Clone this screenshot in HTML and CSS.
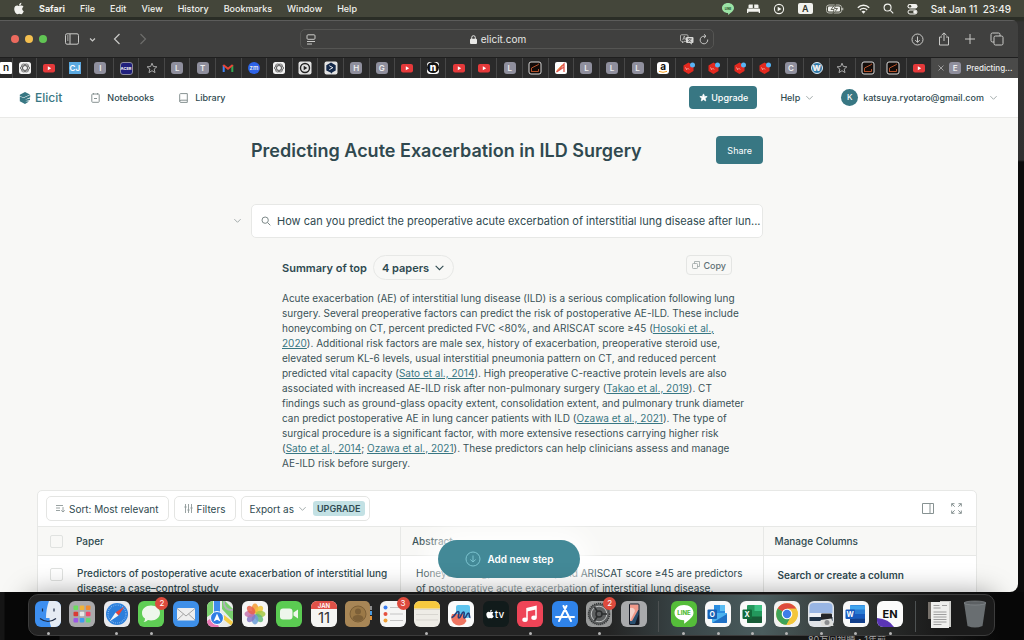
FILE: index.html
```html
<!DOCTYPE html>
<html lang="en">
<head>
    <meta charset="UTF-8" />
    <meta name="viewport" content="width=device-width, initial-scale=1.0"/>
    <title>Predicting Acute Exacerbation in ILD Surgery</title>
    <link rel="stylesheet" href="styles.css">
</head>
<body>
    <!-- Shared icons -->
    <svg class="sprite" aria-hidden="true">
        <symbol id="apple" viewBox="0 0 384 512"><path fill="currentColor" d="M318.7 268.7c-.2-36.7 16.4-64.4 50-84.8-18.8-26.9-47.2-41.7-84.7-44.6-35.5-2.8-74.3 20.7-88.5 20.7-15 0-49.4-19.7-76.4-19.7C63.3 141.2 4 184.8 4 273.5q0 39.3 14.4 81.2c12.8 36.7 59 126.7 107.2 125.2 25.2-.6 43-17.9 75.8-17.9 31.8 0 48.3 17.9 76.4 17.9 48.6-.7 90.4-82.5 102.6-119.3-65.2-30.7-61.7-90-61.7-91.9zm-56.6-164.2c27.3-32.4 24.8-61.9 24-72.5-24.1 1.4-52 16.4-67.9 34.9-17.5 19.8-27.8 44.3-25.6 71.9 26.1 2 49.9-11.4 69.5-34.3z"/></symbol>
        <symbol id="chevron" viewBox="0 0 10 10"><path d="M1.500 3.500 5 7l3.500-3.500" fill="none" stroke="currentColor" stroke-width="1"/></symbol>
        <symbol id="search" viewBox="0 0 12 12"><g fill="none" stroke="currentColor" stroke-width="1.200"><circle cx="5" cy="5" r="3.800"/><path d="m8 8 3.200 3.200"/></g></symbol>
        <symbol id="youtube" viewBox="0 0 14 14"><rect x="1" y="3" width="12" height="8.500" rx="2" fill="#e5393a"/><path d="M5.800 5.300v4l3.400-2z" fill="#fff"/></symbol>
        <symbol id="openai" viewBox="0 0 14 14"><rect x="1" y="1" width="12" height="12" rx="2.500" fill="#f1f1f1"/><g fill="none" stroke="#333" stroke-width=".6"><ellipse cx="7" cy="7" rx="4.600" ry="2.300"/><ellipse cx="7" cy="7" rx="4.600" ry="2.300" transform="rotate(60 7 7)"/><ellipse cx="7" cy="7" rx="4.600" ry="2.300" transform="rotate(120 7 7)"/></g></symbol>
        <symbol id="star" viewBox="0 0 12 12"><path d="M6 1.200 7.400 4.500l3.500.3-2.700 2.300.8 3.500L6 8.700l-3 1.900.8-3.500-2.700-2.300 3.500-.3z" stroke="currentColor"/></symbol>
        <symbol id="graph" viewBox="0 0 14 14"><rect x="1" y="1" width="12" height="12" rx="2" fill="#120c0a" stroke="#d8d8d8"/><path d="M3.500 11V7l7-3.500v-.8M3.500 10.500h7V8" fill="none" stroke="#b4512a" stroke-width="1"/></symbol>
        <symbol id="redhex" viewBox="0 0 14 14"><path d="m6.500 1.500 5 3v5.500l-5 3-5-3V4.500z" fill="#e3291f"/><path d="m3.500 6.500 1.500 2.500m.5-2L7 8.500" stroke="#fff" stroke-width=".6"/><circle cx="10.500" cy="4" r="2.500" fill="#56b4f4"/></symbol>
    </svg>

    <div class="desktop">
        <header class="menubar">
            <nav class="menu-left">
                <svg class="apple"><use href="#apple"/></svg>
                <b>Safari</b><span>File</span><span>Edit</span><span>View</span><span>History</span><span>Bookmarks</span><span>Window</span><span>Help</span>
            </nav>
            <div class="menu-right">
                <svg width="12" height="12" viewBox="0 0 12 12"><path d="M6 0c3.400 0 6 2.200 6 5s-3 4.800-6 7c.2-1 .2-1.600 0-2-3.400 0-6-2.200-6-5s2.600-5 6-5z" fill="#9be3a5"/><text x="6" y="6.500" class="line-mini">LINE</text></svg>
                <svg width="13" height="11" viewBox="0 0 13 11"><path d="M1.500 5V2.500q0-1 1-1h3.300V5zM7.200 5V1.500h3.300q1 0 1 1V5z" fill="#f2f2ee"/><path d="M0 6.500q0-1 1-1h11q1 0 1 1V10h-1.300V8.700H1.300V10H0z" fill="#f2f2ee"/></svg>
                <svg width="12" height="12" viewBox="0 0 12 12"><circle cx="6" cy="6" r="4.600" fill="none" stroke="#f2f2ee" stroke-width="1.100"/><path d="M4.700 3.700v4.600L8.500 6z" fill="#f2f2ee"/></svg>
                <span class="input-source">A</span>
                <svg width="18" height="10" viewBox="0 0 18 10"><rect x=".5" y="1" width="15" height="8" rx="2.500" fill="none" stroke="#b9bab2"/><rect x="2" y="2.500" width="12" height="5" rx="1" fill="#f2f2ee"/><path d="M9.500 0 5 5.500h3L7 10l4.500-5.500h-3z" fill="#f2f2ee" stroke="#44463a" stroke-width=".8"/><path d="M16.700 3.700v2.600" stroke="#b9bab2" stroke-width="1.200"/></svg>
                <svg width="13" height="10" viewBox="0 0 13 10"><g fill="none" stroke="#f2f2ee" stroke-width="1.400"><path d="M.8 3.700a8 8 0 0 1 11.400 0"/><path d="M2.800 5.900a5.200 5.200 0 0 1 7.400 0"/></g><path d="M4.500 7.600a3 3 0 0 1 4 0L6.500 9.800z" fill="#f2f2ee"/></svg>
                <svg width="11" height="11"><use href="#search"/></svg>
                <svg width="11" height="12" viewBox="0 0 11 12"><rect x=".5" y="1" width="10" height="4.500" rx="2.200" fill="#f2f2ee"/><circle cx="3" cy="3.200" r="1.300" fill="#44463a"/><rect x="1" y="7" width="9" height="4" rx="2" fill="none" stroke="#f2f2ee"/><circle cx="8" cy="9" r="1.800" fill="#f2f2ee"/></svg>
                <time>Sat Jan 11&nbsp; 23:49</time>
            </div>
        </header>

        <section class="window">
            <div class="toolbar">
                <div class="lights"><i class="red"></i><i class="yellow"></i><i class="green"></i></div>
                <button class="tool sidebar" aria-label="Sidebar"><svg width="14" height="12" viewBox="0 0 14 12" fill="none" stroke="currentColor"><rect x=".5" y=".8" width="13" height="10.400" rx="1.500"/><path d="M5 1v10M2 3h1.500M2 5h1.500M2 7h1.500"/></svg></button>
                <button class="tool arrow" aria-label="Tab groups"><svg width="7" height="7" viewBox="0 0 10 10"><path d="M1.500 3.500 5 7l3.500-3.500" fill="none" stroke="currentColor" stroke-width="1.800"/></svg></button>
                <button class="tool back" aria-label="Back"><svg width="8" height="12" viewBox="0 0 8 12"><path d="M6.500 1 1.500 6l5 5" fill="none" stroke="currentColor" stroke-width="1.200"/></svg></button>
                <button class="tool forward" aria-label="Forward"><svg width="8" height="12" viewBox="0 0 8 12"><path d="m1.500 1 5 5-5 5" fill="none" stroke="currentColor" stroke-width="1.200"/></svg></button>
                <div class="address">
                    <svg width="10" height="11" viewBox="0 0 10 11" fill="none" stroke="#c9c9c7"><rect x="1" y=".8" width="8" height="4.500" rx="1"/><path d="M1 7.500h8M1 10h5"/></svg>
                    <span class="host"><svg width="7" height="9" viewBox="0 0 7 9"><rect y="3.800" width="7" height="5.200" rx="1" fill="#e8e8e6"/><path d="M1.700 4V2.500a1.800 1.800 0 0 1 3.600 0V4" fill="none" stroke="#e8e8e6"/></svg>elicit.com</span>
                    <svg width="14" height="11" viewBox="0 0 14 11"><path d="M1.500.8h5.500a1 1 0 0 1 1 1v4.500a1 1 0 0 1-1 1H4L2.500 9V7.300h-1a1 1 0 0 1-1-1V1.800a1 1 0 0 1 1-1z" fill="none" stroke="#c9c9c7" stroke-width=".8"/><path d="m2.700 6 1.600-4 1.500 4M3.200 4.800h2.200" fill="none" stroke="#c9c9c7" stroke-width=".7"/><path d="M7 3h5.500a1 1 0 0 1 1 1v4a1 1 0 0 1-1 1h-.7v1.700L10 9H7a1 1 0 0 1-1-1V4a1 1 0 0 1 1-1z" fill="#d8d8d6"/><path d="M7.700 4.800h4M9.700 4v.8M8 7.800c1.500-.5 2.600-1.500 3-3M8.300 5c.6 1.500 1.500 2.400 3 2.900" fill="none" stroke="#444" stroke-width=".7"/></svg>
                    <svg width="10" height="11" viewBox="0 0 10 11"><path d="M8.700 5.500A3.800 3.800 0 1 1 5 2.200h1.500M5 .3l2 1.900-2 1.900" fill="none" stroke="#c9c9c7"/></svg>
                </div>
                <div class="window-tools">
                    <svg width="13" height="13" viewBox="0 0 13 13"><circle cx="6.500" cy="6.500" r="5.500"/><path d="M6.500 3.500v5.800M4.200 7l2.300 2.400L8.800 7"/></svg>
                    <svg width="12" height="14" viewBox="0 0 12 14"><path d="M4 5H1.500v8h9V5H8M6 9V1M3.500 3.300 6 .9l2.500 2.400"/></svg>
                    <svg width="12" height="12" viewBox="0 0 12 12"><path d="M6 1v10M1 6h10"/></svg>
                    <svg width="14" height="14" viewBox="0 0 14 14"><rect x="4" y="4" width="9" height="9" rx="1.500"/><path d="M4 10H2.500A1.500 1.500 0 0 1 1 8.500v-6A1.500 1.500 0 0 1 2.500 1h6A1.500 1.500 0 0 1 10 2.500V4"/></svg>
                </div>
            </div>

            <div class="tabs">
                <span class="tab tab-cut"><i class="fav fav-n">n</i></span>
                <span class="tab tab-first"><svg><use href="#openai"/></svg></span>
                <span class="tab"><svg><use href="#youtube"/></svg></span>
                <span class="tab"><i class="fav fav-cj">CJ</i></span>
                <span class="tab"><i class="fav">I</i></span>
                <span class="tab"><i class="fav fav-acer">ACER</i></span>
                <span class="tab"><svg class="tab-star"><use href="#star"/></svg></span>
                <span class="tab"><i class="fav">L</i></span>
                <span class="tab"><i class="fav">T</i></span>
                <span class="tab"><svg viewBox="0 0 14 14"><path d="M2.700 11V4" stroke="#4285f4" stroke-width="2"/><path d="M11.300 11V4" stroke="#34a853" stroke-width="2"/><path d="m2.300 4 4.700 3.700L11.700 4" fill="none" stroke="#ea4335" stroke-width="2"/></svg></span>
                <span class="tab"><i class="fav fav-zm">zm</i></span>
                <span class="tab"><svg><use href="#openai"/></svg></span>
                <span class="tab"><svg viewBox="0 0 14 14"><rect x=".5" y=".5" width="13" height="13" rx="2" fill="#e3e3e3"/><circle cx="7" cy="7" r="4.500" fill="none" stroke="#222" stroke-width="1.400"/><path d="M5.700 4.800v4.400L9.300 7z" fill="#222"/></svg></span>
                <span class="tab"><svg viewBox="0 0 14 14"><rect x=".5" y=".5" width="13" height="13" rx="2" fill="#e3e3e3"/><path d="m7 1.500 4.700 2.700v5.300L8.500 11.300 7 12.800v-1L2.300 9.500V4.200z" fill="#14294a"/><path d="m5.300 4.700 3.500 2-3.500 2" fill="none" stroke="#fff" stroke-width=".9"/></svg></span>
                <span class="tab"><i class="fav">H</i></span>
                <span class="tab"><i class="fav">G</i></span>
                <span class="tab"><svg><use href="#youtube"/></svg></span>
                <span class="tab"><i class="fav fav-disc"><b>n</b></i></span>
                <span class="tab"><svg><use href="#youtube"/></svg></span>
                <span class="tab"><svg><use href="#youtube"/></svg></span>
                <span class="tab"><i class="fav">L</i></span>
                <span class="tab"><svg><use href="#graph"/></svg></span>
                <span class="tab"><svg viewBox="0 0 14 14"><rect x="1" y="1" width="12" height="12" rx="2" fill="#fff"/><path d="M2.500 11 10 3v8M2.500 11 10 6" fill="none" stroke="#e2574c" stroke-width="1.300"/><path d="M3 9.500 8 4" stroke="#f0a050"/></svg></span>
                <span class="tab"><i class="fav">L</i></span>
                <span class="tab"><i class="fav">L</i></span>
                <span class="tab"><i class="fav">L</i></span>
                <span class="tab"><i class="fav fav-amazon">a<svg viewBox="0 0 8 2"><path d="M0 .4q4 1.800 8 0" fill="none" stroke="#f39b1c"/></svg></i></span>
                <span class="tab"><svg><use href="#redhex"/></svg></span>
                <span class="tab"><svg><use href="#redhex"/></svg></span>
                <span class="tab"><svg><use href="#redhex"/></svg></span>
                <span class="tab"><svg><use href="#redhex"/></svg></span>
                <span class="tab"><i class="fav">C</i></span>
                <span class="tab"><i class="fav fav-wp"><b>W</b></i></span>
                <span class="tab"><svg class="tab-star"><use href="#star"/></svg></span>
                <span class="tab"><svg><use href="#graph"/></svg></span>
                <span class="tab"><svg><use href="#graph"/></svg></span>
                <span class="tab"><svg><use href="#youtube"/></svg></span>
                <span class="tab tab-active">
                    <svg class="tab-close" viewBox="0 0 6 6"><path d="m.5.5 5 5m0-5-5 5" stroke="#b5b5b5" stroke-width=".8"/></svg>
                    <i class="fav">E</i>
                    Predicting...
                </span>
            </div>

            <div class="page">
                <header class="site-header">
                    <a href="#" class="brand"><svg width="12" height="12" viewBox="0 0 12 12" fill="#387783"><path d="M6 0 11 2.500 4.500 5.400.8 4V2.700z"/><path d="M.8 4.600 4.600 6 11.200 3v2.300L5.800 7.800 11 6.600v1.500L6.200 9.200l3.800.2L6 12 .8 9.300z"/></svg>Elicit</a>
                    <a href="#" class="nav-link nav-notebooks"><svg width="9" height="10" viewBox="0 0 9 10" fill="none" stroke="currentColor"><rect x=".8" y="1" width="7.400" height="8.300" rx=".8"/><path d="M3 5.500h3M2.500 0v1.500M6.500 0v1.500"/></svg>Notebooks</a>
                    <a href="#" class="nav-link nav-library"><svg width="9" height="10" viewBox="0 0 9 10" fill="none" stroke="currentColor"><path d="M.7 8.500V1.500q0-.9.900-.9h6.700v6.600H2Q.7 7.200.7 8.300T2 9.400h6.300V7"/></svg>Library</a>
                    <a href="#" class="upgrade-btn"><svg width="9" height="9" fill="#fff" color="#fff"><use href="#star"/></svg>Upgrade</a>
                    <button class="nav-menu help-menu">Help<svg class="chev"><use href="#chevron"/></svg></button>
                    <button class="nav-menu"><span class="avatar">K</span>katsuya.ryotaro@gmail.com<svg class="chev"><use href="#chevron"/></svg></button>
                </header>

                <main>
                    <div class="column">
                        <div class="title-row">
                            <h1>Predicting Acute Exacerbation in ILD Surgery</h1>
                            <button class="share-btn">Share</button>
                        </div>

                        <div class="question-row">
                            <button class="collapse" aria-label="Collapse"><svg class="chev"><use href="#chevron"/></svg></button>
                            <label class="question">
                                <svg width="10" height="10"><use href="#search"/></svg>
                                <input type="text" aria-label="Question" value="How can you predict the preoperative acute excerbation of interstitial lung disease after lun..." />
                            </label>
                        </div>

                        <section class="summary">
                            <div class="summary-head">
                                <h2>Summary of top</h2>
                                <button class="papers-btn">4 papers<svg width="11" height="11"><use href="#chevron"/></svg></button>
                                <button class="copy-btn"><svg width="8" height="8" viewBox="0 0 8 8" fill="none" stroke="#9ba3a3" stroke-width=".8"><rect x=".5" y="2.500" width="5" height="5" rx=".8"/><path d="M2.500 2.500v-2h5v5h-2"/></svg>Copy</button>
                            </div>
                            <p>Acute exacerbation (AE) of interstitial lung disease (ILD) is a serious complication following lung<br>
                            surgery. Several preoperative factors can predict the risk of postoperative AE-ILD. These include<br>
                            honeycombing on CT, percent predicted FVC &lt;80%, and ARISCAT score ≥45 (<a href="#">Hosoki et al.,<br>
                            2020</a>). Additional risk factors are male sex, history of exacerbation, preoperative steroid use,<br>
                            elevated serum KL-6 levels, usual interstitial pneumonia pattern on CT, and reduced percent<br>
                            predicted vital capacity (<a href="#">Sato et al., 2014</a>). High preoperative C-reactive protein levels are also<br>
                            associated with increased AE-ILD risk after non-pulmonary surgery (<a href="#">Takao et al., 2019</a>). CT<br>
                            findings such as ground-glass opacity extent, consolidation extent, and pulmonary trunk diameter<br>
                            can predict postoperative AE in lung cancer patients with ILD (<a href="#">Ozawa et al., 2021</a>). The type of<br>
                            surgical procedure is a significant factor, with more extensive resections carrying higher risk<br>
                            (<a href="#">Sato et al., 2014</a>; <a href="#">Ozawa et al., 2021</a>). These predictors can help clinicians assess and manage<br>
                            AE-ILD risk before surgery.</p>
                        </section>
                    </div>

                    <section class="papers">
                        <div class="papers-tools">
                            <button class="tool-btn sort-btn"><svg width="9" height="9" viewBox="0 0 9 9" fill="none" stroke="#8f9898" stroke-width=".9"><path d="M0 1.500h7M0 4h4M0 6.500h4M7 3v5M5.200 6.300 7 8l1.800-1.700"/></svg>Sort: Most relevant</button>
                            <button class="tool-btn filter-btn"><svg width="9" height="9" viewBox="0 0 9 9" fill="none" stroke="#8f9898" stroke-width=".9"><path d="M1.500 0v9M4.500 0v9M7.500 0v9M.3 3h2.400M3.300 6h2.400M6.300 4h2.400"/></svg>Filters</button>
                            <button class="tool-btn export-btn">Export as<svg class="chev"><use href="#chevron"/></svg><span class="upgrade-tag">UPGRADE</span></button>
                            <div class="view-btns">
                                <button aria-label="Side panel"><svg width="12" height="11" viewBox="0 0 12 11" fill="none" stroke="currentColor"><path d="M.5.5h11v10H.5zM8 .5v10"/></svg></button>
                                <button aria-label="Full screen"><svg width="11" height="11" viewBox="0 0 11 11" fill="none" stroke="currentColor"><path d="M.7 3.500V.7h2.800M.7.7l3 3M7.500.7h2.800v2.800M10.300.7l-3 3M.7 7.500v2.800h2.800M.7 10.300l3-3M10.300 7.500v2.800H7.500M10.300 10.300l-3-3"/></svg></button>
                            </div>
                        </div>
                        <table>
                            <thead>
                                <tr>
                                    <th><label><input type="checkbox" aria-label="Select all" />Paper</label></th>
                                    <th>Abstract</th>
                                    <th>Manage Columns</th>
                                </tr>
                            </thead>
                            <tbody>
                                <tr>
                                    <td><label><input type="checkbox" /><span>Predictors of postoperative acute exacerbation of interstitial lung<br>disease: a case–control study</span></label></td>
                                    <td class="abstract">Honeycombing, %FVC &lt;80%, and ARISCAT score ≥45 are predictors<br>of postoperative acute exacerbation of interstitial lung disease.</td>
                                    <td class="search-col">Search or create a column</td>
                                </tr>
                            </tbody>
                        </table>
                    </section>
                </main>

                <button class="add-step"><svg width="16" height="16" viewBox="0 0 16 16" fill="none" stroke="#7cc4d0"><circle cx="8" cy="8" r="7"/><path d="M8 4.500v6.500M5.300 8.500 8 11l2.700-2.500"/></svg>Add new step</button>
            </div>
        </section>

        <footer class="dock-area">
            <div class="dock">
                <span class="app running"><svg viewBox="0 0 26 26"><rect width="26" height="26" rx="6" fill="#3d8ff0"/><path d="M14 0h6a6 6 0 0 1 6 6v14a6 6 0 0 1-6 6h-4c-1-3-1.500-6-1.500-9H11C11 11 12 5 14 0z" fill="#e6ecf4"/><path d="M7.500 7.500v3M19 7.500v3M5 17.500q8 6 16 0" fill="none" stroke="#1d2a44" stroke-width="1.200"/></svg></span>
                <span class="app"><svg viewBox="0 0 26 26"><rect width="26" height="26" rx="6" fill="#a9a9ac"/><g><rect x="4.500" y="4.500" width="4.600" height="4.600" rx="1" fill="#6bdc5f"/><rect x="10.700" y="4.500" width="4.600" height="4.600" rx="1" fill="#f0b43a"/><rect x="16.900" y="4.500" width="4.600" height="4.600" rx="1" fill="#f08c31"/><rect x="4.500" y="10.700" width="4.600" height="4.600" rx="1" fill="#d93a34"/><rect x="10.700" y="10.700" width="4.600" height="4.600" rx="1" fill="#e6e6e6"/><rect x="16.900" y="10.700" width="4.600" height="4.600" rx="1" fill="#ef4668"/><rect x="4.500" y="16.900" width="4.600" height="4.600" rx="1" fill="#9d57e6"/><rect x="10.700" y="16.900" width="4.600" height="4.600" rx="1" fill="#3f9bf0"/><rect x="16.900" y="16.900" width="4.600" height="4.600" rx="1" fill="#62dc70"/></g></svg></span>
                <span class="app running"><svg viewBox="0 0 26 26"><rect width="26" height="26" rx="6" fill="#e9e9ec"/><circle cx="13" cy="13" r="11" fill="#2c7fdc"/><circle cx="13" cy="13" r="9" fill="none" stroke="#a4cdf5" stroke-width="1.200" stroke-dasharray=".6 1.300"/><path d="m20.500 5.500-9 6 3 3z" fill="#e8443a"/><path d="m5.500 20.500 6-9 3 3z" fill="#f4f4f4"/></svg></span>
                <span class="app running"><svg viewBox="0 0 26 26"><rect width="26" height="26" rx="6" fill="#5fce55"/><path d="M13 4.500c5.200 0 9 3.300 9 7.500s-3.800 7.500-9 7.500q-1.500 0-3-.4Q8 21 5.500 21q1.700-1.500 1.500-3.500Q4 15.500 4 12c0-4.200 3.800-7.500 9-7.500z" fill="#eef7ec"/></svg><em class="badge">2</em></span>
                <span class="app"><svg viewBox="0 0 26 26"><rect width="26" height="26" rx="6" fill="#3e8fe8"/><rect x="4" y="7" width="18" height="12.500" rx="1" fill="#eeeeee"/><path d="m4 7.500 9 7.500 9-7.500M4 19l6.500-6M22 19l-6.500-6" fill="none" stroke="#9a9a9a" stroke-width=".9"/></svg></span>
                <span class="app"><svg viewBox="0 0 26 26"><clipPath id="map-clip"><rect width="26" height="26" rx="6"/></clipPath><g clip-path="url(#map-clip)"><path fill="#e9eceb" d="M0 0h26v26H0z"/><path d="M0 0h6v12L0 16z" fill="#7bd06d"/><path d="m15 8 11 12V8L18 0h-3z" fill="#79d06d"/><path d="M0 26v-6l7-5 5 11z" fill="#ea78b4"/><path d="M7 0h6v14H7z" fill="#3e8cec"/><circle cx="24" cy="2" r="7" fill="none" stroke="#aeb3b5" stroke-width="2"/><path d="m16 18 10 8v-5L17 14z" fill="#f5cd47"/><circle cx="10" cy="17" r="6.500" fill="#2f7de4" stroke="#fff"/><path d="m10 12.500 3.500 8-3.500-1.800-3.500 1.800z" fill="#fff"/></g></svg></span>
                <span class="app"><svg viewBox="0 0 26 26"><rect width="26" height="26" rx="6" fill="#f6f6f5"/><g fill-opacity=".85"><ellipse cx="13" cy="7.500" rx="3.300" ry="5" fill="#f59b31"/><ellipse cx="13" cy="7.500" rx="3.300" ry="5" fill="#eec73a" transform="rotate(45 13 13)"/><ellipse cx="13" cy="7.500" rx="3.300" ry="5" fill="#a5c943" transform="rotate(90 13 13)"/><ellipse cx="13" cy="7.500" rx="3.300" ry="5" fill="#63bb7a" transform="rotate(135 13 13)"/><ellipse cx="13" cy="7.500" rx="3.300" ry="5" fill="#6c9fd9" transform="rotate(180 13 13)"/><ellipse cx="13" cy="7.500" rx="3.300" ry="5" fill="#8577c4" transform="rotate(225 13 13)"/><ellipse cx="13" cy="7.500" rx="3.300" ry="5" fill="#c472ac" transform="rotate(270 13 13)"/><ellipse cx="13" cy="7.500" rx="3.300" ry="5" fill="#e8604c" transform="rotate(315 13 13)"/></g></svg></span>
                <span class="app"><svg viewBox="0 0 26 26"><rect width="26" height="26" rx="6" fill="#5bcb52"/><rect x="4" y="7.500" width="12.500" height="11" rx="3" fill="#eef6ec"/><path d="m17.500 11.500 4.500-3v9l-4.500-3z" fill="#eef6ec"/></svg></span>
                <span class="app"><svg viewBox="0 0 26 26"><rect width="26" height="26" rx="6" fill="#f5f5f3"/><path d="M0 8V6a6 6 0 0 1 6-6h14a6 6 0 0 1 6 6v2z" fill="#df5148"/><text x="13" y="6.500" class="cal-month">JAN</text><text x="13" y="21.500" class="cal-day">11</text></svg></span>
                <span class="app"><svg viewBox="0 0 26 26"><path d="M24 5h3v4h-3z" fill="#8f8f8f"/><path d="M24 10h3v4h-3z" fill="#4d9be0"/><path d="M24 15h3v4h-3z" fill="#e0923c"/><rect width="25" height="26" rx="5" fill="#a88656"/><circle cx="13" cy="13" r="8" fill="#9b7947" stroke="#7d6038"/><circle cx="13" cy="10.500" r="3" fill="#7d6038"/><path d="M7.500 18q0-4 5.500-4t5.500 4q-5.500 4.500-11 0z" fill="#7d6038"/></svg></span>
                <span class="app"><svg viewBox="0 0 26 26"><rect width="26" height="26" rx="6" fill="#f5f5f4"/><circle cx="5.500" cy="6.500" r="2" fill="#3a7df0"/><circle cx="5.500" cy="13" r="2" fill="#e5503f"/><circle cx="5.500" cy="19.500" r="2" fill="#f0a037"/><path d="M10 6.500h13M10 13h13M10 19.500h13" stroke="#c4c4c4"/></svg><em class="badge">3</em></span>
                <span class="app running"><svg viewBox="0 0 26 26"><rect width="26" height="26" rx="6" fill="#eeece6"/><path d="M0 7.500V6a6 6 0 0 1 6-6h14a6 6 0 0 1 6 6v1.500z" fill="#f6c93f"/><path d="M0 8.500h26M2 13.500h22M2 19h22" stroke="#cfcdc6" stroke-width=".7"/></svg></span>
                <span class="app"><svg viewBox="0 0 26 26"><rect width="26" height="26" rx="6" fill="#fbfbfb"/><rect x="8" y="4" width="14" height="13" rx="2" fill="#5fc4ee"/><path d="M4 13a8 8 0 0 0 14.500 7L15 13z" fill="#ef7562"/><path d="M3.500 16.500c3 0 4.500-6 6.500-6 2.500 0-1 6.500 1 6.500s2.500-6 4.500-6-1 6 1 6 2-5 4-5c1.500 0 0 4.500 2 4.500" fill="none" stroke="#243f7c" stroke-width="1.600"/></svg></span>
                <span class="app"><svg viewBox="0 0 26 26"><rect width="26" height="26" rx="6" fill="#111b1b"/><svg x="3" y="8" width="8" height="10" color="#fff"><use href="#apple"/></svg><text x="16.500" y="17" class="apple-tv">tv</text></svg></span>
                <span class="app running"><svg viewBox="0 0 26 26"><rect width="26" height="26" rx="6" fill="#ee4457"/><path d="M10 18.500v-11l9-2v11" fill="none" stroke="#fff" stroke-width="1.500"/><path d="M10 7.500 19 5.500v3l-9 2z" fill="#fff"/><ellipse cx="8" cy="18.800" rx="2.700" ry="2.200" fill="#fff"/><ellipse cx="17" cy="16.800" rx="2.700" ry="2.200" fill="#fff"/></svg></span>
                <span class="app"><svg viewBox="0 0 26 26"><rect width="26" height="26" rx="6" fill="#2f83ea"/><path d="m14.500 5-7.500 15M11.500 5l7.500 15M4 16h11M18.500 16H22" fill="none" stroke="#fff" stroke-width="2" stroke-linecap="round"/></svg></span>
                <span class="app running"><svg viewBox="0 0 26 26"><rect width="26" height="26" rx="6" fill="#9a9b9b"/><circle cx="13" cy="13" r="10.500" fill="#5e6061" stroke="#343637" stroke-width="1.500" stroke-dasharray="1.200 .8"/><circle cx="13" cy="13" r="7.800" fill="none" stroke="#c0c2c2"/><circle cx="13" cy="13" r="3" fill="none" stroke="#2b2d2e" stroke-width="1.500"/><path d="M15.500 13H21M11.500 15 8.500 20M11.500 11l-3-5" stroke="#2b2d2e" stroke-width="1.500"/></svg><em class="badge">2</em></span>
                <span class="app"><svg viewBox="0 0 26 26"><rect width="26" height="26" rx="6" fill="#a9aaac"/><rect x="8" y="2.500" width="10.500" height="21.500" rx="1.500" fill="#171a24"/><path d="M9 3.500h8.500v10L14 23H9z" fill="#294f70"/><path d="M9 3.500h8.500v5L11 20H9z" fill="#ef9a8a"/><path d="M9 7q4-1 5 3L9 20z" fill="#f2d2cb"/></svg></span>
                <span class="divider"></span>
                <span class="app running"><svg viewBox="0 0 26 26"><rect width="26" height="26" rx="6" fill="#55bd3a"/><path d="M13 4c5.500 0 9.500 3.400 9.500 7.700 0 4-4.500 7.300-9.500 11 .3-1.700.3-3 0-3.500-5.500 0-9.500-3.300-9.500-7.500S7.500 4 13 4z" fill="#fff"/><text x="13" y="14" class="line-app">LINE</text></svg></span>
                <span class="app running"><svg viewBox="0 0 26 26"><rect width="26" height="26" rx="6" fill="#f9f9f9"/><path d="M9 4h11v12H9z" fill="#2a8de0"/><path d="M15 4h5v6h-5z" fill="#5bbdf2"/><path d="M7 12h15v9q0 1-1 1H8q-1 0-1-1z" fill="#4ab1ee"/><path d="m7 22 15-9v8q0 1-1 1z" fill="#1f70c4"/><rect x="2.500" y="8.500" width="9.500" height="9.500" rx="1" fill="#1762b5"/><text x="7.200" y="15.800" class="office">O</text></svg></span>
                <span class="app running"><svg viewBox="0 0 26 26"><rect width="26" height="26" rx="6" fill="#f9f9f9"/><rect x="7" y="4" width="15" height="18" rx="1" fill="#23985c"/><path d="M14.500 4H21q1 0 1 1v5h-7.500z" fill="#3cc183"/><path d="M7 15.500h15V21q0 1-1 1H8q-1 0-1-1z" fill="#185c37"/><rect x="2.500" y="8.500" width="9.500" height="9.500" rx="1" fill="#136b3b"/><text x="7.200" y="15.800" class="office">X</text></svg></span>
                <span class="app running"><svg viewBox="0 0 26 26"><rect width="26" height="26" rx="6" fill="#f2f2f1"/><circle cx="13" cy="13" r="10.800" fill="#f3c63b"/><path d="M13 13 3.600 7.600A10.800 10.800 0 0 1 22.400 7.800H13z" fill="#dd4b3e"/><path d="M3.600 7.600A10.800 10.800 0 0 0 12.500 23.800L17 15.500 13 13z" fill="#3da357"/><path d="M13 7.800h9.400A10.800 10.800 0 0 1 12.500 23.800L17.500 15z" fill="#f3c63b"/><circle cx="13" cy="13" r="5.300" fill="#fff"/><circle cx="13" cy="13" r="4.200" fill="#3d7ee8"/></svg></span>
                <span class="app running"><svg viewBox="0 0 26 26"><rect width="26" height="26" rx="6" fill="#dfe3e8"/><rect x="1.500" y="2" width="23" height="14" rx="4" fill="#98b5e3"/><path d="M1.500 12h23v4h-23z" fill="#edf0f5"/><path d="M1.500 16h23v4h-23z" fill="#1d3044"/><rect x="13" y="12.500" width="11" height="6" rx="1" fill="#232529"/><path d="m12.500 19 11-1.500 2 7.500h-12z" fill="#dddedc"/><circle cx="19" cy="21.500" r="2.500" fill="#8b8d90"/></svg></span>
                <span class="app running"><svg viewBox="0 0 26 26"><rect width="26" height="26" rx="6" fill="#f9f9f9"/><rect x="7" y="4" width="15" height="18" rx="1" fill="#2b7cd3"/><path d="M7 4.500h15v4H7z" fill="#41a5ee"/><path d="M7 13h15v4.500H7z" fill="#185abd"/><path d="M7 17.500h15V22H7z" fill="#123f8c"/><rect x="2.500" y="8.500" width="9.500" height="9.500" rx="1" fill="#185abd"/><text x="7.200" y="15.800" class="office">W</text></svg></span>
                <span class="app running"><svg viewBox="0 0 26 26"><rect width="26" height="26" rx="6" fill="#fbfbfb"/><path d="M0 17q12 1 17 9H6a6 6 0 0 1-6-6z" fill="#5a35b5"/><text x="13" y="17" class="en-app">EN</text></svg></span>
                <span class="divider"></span>
                <span class="app"><svg viewBox="0 0 26 26"><path d="M1 1h12v17H1z" fill="#76706a"/><path d="M13 0h11v26H13z" fill="#cfcfcc"/><path d="M4 1h18v26H4z" fill="#efefed"/><path d="M6.500 4.500h6M6.500 7h7M15 4.500h5M6.500 11h13M6.500 13.500h13M6.500 16h13M6.500 18.500h13M6.500 21h13M6.500 23.500h8" stroke="#898989" stroke-width=".8"/></svg></span>
                <span class="app"><svg viewBox="0 0 26 26"><path d="M2 1.500 5.500 25q7.500 3 15 0L24 1.500z" fill="#777c80" fill-opacity=".85"/><ellipse cx="13" cy="2" rx="11" ry="2" fill="#5d6164" stroke="#8b9094" stroke-width=".6"/></svg></span>
            </div>
            <p class="video-meta" lang="ja">80万回視聴・1年前</p>
        </footer>
    </div>
</body>
</html>
```
FILE: styles.css
```css
/* General Reset */
* {
    box-sizing: border-box;
    margin: 0;
    padding: 0;
}

body {
    background-color: #0b0b0b;
    color: #2f4a50;
    font-family: Inter, "Noto Sans CJK JP", sans-serif;
    font-size: 10px;
}

button, input {
    font: inherit;
    color: inherit;
}

button {
    border: none;
    background: none;
    cursor: pointer;
}

a {
    color: inherit;
    text-decoration: none;
}

svg {
    flex: none;
}

.sprite {
    display: none;
}

.chev {
    width: 9px;
    height: 9px;
    color: #9aa3a3;
}

/* Desktop */
.desktop {
    display: flex;
    flex-direction: column;
    height: 100vh;
    overflow: hidden;
    background: linear-gradient(to bottom, #2a2d26 20px, #333332 22px, #303030 160px, #0b0b0b 162px);
}

/* Menu Bar */
.menubar {
    display: flex;
    justify-content: space-between;
    align-items: center;
    height: 17px;
    padding: 0 13px 0 14px;
    background: #44463a;
    color: #f2f2ee;
    font-size: 9px;
    font-weight: 500;
}

.menu-left, .menu-right {
    display: flex;
    align-items: center;
}

.menu-left {
    gap: 15px;
}

.menu-right {
    gap: 13px;
}

.menu-right time {
    font-size: 10px;
}

.apple {
    width: 10px;
    height: 13px;
}

.input-source {
    width: 15px;
    background: #f2f2ee;
    border-radius: 2px;
    color: #33352b;
    font-weight: 600;
    line-height: 11px;
    text-align: center;
}

/* Safari Window */
.window {
    flex: 1;
    min-height: 0;
    display: flex;
    flex-direction: column;
    margin: 3px 6px 0 0;
    border-radius: 0 6px 8px 0;
    overflow: hidden;
}

.toolbar {
    display: flex;
    align-items: center;
    height: 37px;
    padding: 0 14px 0 11px;
    background: #40403f;
    border-top: 1px solid #5c5c5b;
    color: #c9c9c7;
}

.lights {
    display: flex;
    gap: 6px;
    margin-right: 18px;
}

.lights i {
    width: 8px;
    height: 8px;
    border-radius: 50%;
}

.red { background: #ec6a5e; }
.yellow { background: #f4bf4f; }
.green { background: #61c554; }

.tool {
    display: flex;
    color: inherit;
}

.arrow {
    margin: 0 17px 0 10px;
}

.forward {
    margin-left: 18px;
    color: #6d6d6b;
}

.address {
    flex: 1;
    display: flex;
    align-items: center;
    gap: 5px;
    max-width: 414px;
    height: 20px;
    margin-left: 153px;
    padding: 0 4px 0 5px;
    border: 1px solid #555553;
    border-radius: 5px;
}

.host {
    flex: 1;
    display: flex;
    align-items: center;
    justify-content: center;
    gap: 4px;
    color: #e8e8e6;
}

.window-tools {
    display: flex;
    align-items: center;
    gap: 14px;
    margin-left: auto;
    fill: none;
    stroke: #c9c9c7;
}

/* Tab Strip */
.tabs {
    display: flex;
    height: 21px;
    background: #2a2a2a;
    border-top: 1px solid #1f1f1f;
}

.tab {
    flex: 1;
    display: flex;
    align-items: center;
    justify-content: center;
    min-width: 0;
    border-right: 1px solid #474747;
    color: #ededed;
}

.tab svg {
    width: 14px;
    height: 14px;
}

.tab-cut {
    flex: none;
    width: 13px;
}

.tab-first {
    flex: none;
    width: 24px;
}

.tab .tab-star {
    width: 12px;
    height: 12px;
    color: #a9a9a9;
    fill: none;
}

.fav {
    flex: none;
    width: 12px;
    height: 12px;
    border-radius: 3px;
    background: #8f8f9d;
    color: #ededed;
    font-size: 8px;
    font-style: normal;
    font-weight: 600;
    line-height: 12px;
    text-align: center;
}

.fav-n {
    border-radius: 1px;
    background: #fff;
    color: #111;
    font-size: 10px;
    line-height: 11px;
}

.fav-cj {
    border-radius: 0;
    background: #5ba9e0;
    color: #fff;
}

.fav-acer {
    width: 13px;
    height: 13px;
    border: 1px solid #8d8da0;
    background: #20207d;
    font-size: 4px;
    font-weight: 800;
}

.fav-zm {
    border-radius: 50%;
    background: #2e63e6;
    font-size: 6px;
}

.fav-disc {
    background: #fff;
}

.fav-disc b {
    display: block;
    border-radius: 50%;
    background: #111;
    color: #fff;
    font-size: 10px;
    line-height: 11px;
}

.fav-amazon {
    display: flex;
    flex-direction: column;
    align-items: center;
    background: #fff;
    color: #111;
    font-size: 10px;
    font-weight: 700;
    line-height: 9px;
}

.fav-amazon svg {
    width: 8px;
    height: 2px;
}

.fav-wp {
    border: 1px solid #dcecf6;
    border-radius: 50%;
    background: #2f77a5;
    line-height: 10px;
}

.tab-active {
    flex: none;
    justify-content: flex-start;
    gap: 5px;
    width: 86px;
    padding-left: 6px;
    border-right: none;
    background: #4a4a49;
    font-size: 8px;
    font-weight: 500;
    white-space: nowrap;
}

.tab .tab-close {
    width: 6px;
    height: 6px;
}

/* Page */
.page {
    position: relative;
    flex: 1;
    min-height: 0;
    overflow: hidden;
    background: #f8f8f6;
}

.site-header {
    display: flex;
    align-items: center;
    height: 40px;
    padding: 0 20px 0 19px;
    background: #fff;
    border-bottom: 1px solid #e9e9e7;
    font-size: 9px;
    font-weight: 500;
}

.brand {
    display: flex;
    align-items: center;
    gap: 4px;
    color: #387783;
    font-size: 12px;
}

.nav-link {
    display: flex;
    align-items: center;
    gap: 7px;
}

.nav-link svg {
    color: #879292;
}

.nav-notebooks {
    margin-left: 29px;
}

.nav-library {
    margin-left: 25px;
}

.upgrade-btn {
    display: flex;
    align-items: center;
    gap: 3px;
    height: 23px;
    margin-left: auto;
    padding: 0 9px 0 10px;
    border-radius: 4px;
    background: #387783;
    color: #fff;
}

.nav-menu {
    display: flex;
    align-items: center;
    gap: 5px;
    font-weight: 500;
}

.help-menu {
    margin: 0 27px 0 23px;
}

.avatar {
    width: 17px;
    border-radius: 50%;
    background: #387783;
    color: #fff;
    font-size: 8px;
    line-height: 17px;
}

main {
    padding: 18px 41px 0 37px;
}

.column {
    width: 512px;
    max-width: 100%;
    margin: 0 auto;
}

.title-row {
    display: flex;
    align-items: center;
    justify-content: space-between;
}

h1 {
    color: #30494f;
    font-size: 18px;
    font-weight: 600;
}

.share-btn {
    height: 28px;
    padding: 0 11px;
    border-radius: 4px;
    background: #387783;
    color: #fff;
    font-size: 9px;
}

.question-row {
    display: flex;
    align-items: center;
    gap: 9px;
    margin: 40px 0 0 -18px;
}

.question {
    flex: 1;
    display: flex;
    align-items: center;
    gap: 6px;
    height: 34px;
    padding-left: 9px;
    border: 1px solid #e7e8e6;
    border-radius: 5px;
    background: #fff;
    color: #7d8989;
}

.question input {
    flex: 1;
    min-width: 0;
    border: none;
    outline: none;
    background: none;
    color: #2f4a50;
    font-size: 11px;
    text-overflow: ellipsis;
}

/* Summary */
.summary {
    margin: 17px 31px 0;
}

.summary-head {
    display: flex;
    align-items: center;
    gap: 6px;
    margin-bottom: 11px;
}

h2 {
    font-size: 11px;
    font-weight: 600;
}

.papers-btn {
    display: flex;
    align-items: center;
    gap: 5px;
    height: 25px;
    padding: 0 8px;
    border: 1px solid #e7e8e6;
    border-radius: 13px;
    font-size: 11px;
    font-weight: 600;
}

.copy-btn {
    display: flex;
    align-items: center;
    gap: 3px;
    height: 20px;
    margin: 0 0 5px auto;
    padding: 0 5px;
    border: 1px solid #e4e5e3;
    border-radius: 4px;
    color: #5f7175;
    font-size: 9px;
    font-weight: 500;
}

.summary p {
    color: #3a5257;
    font-size: 10px;
    line-height: 15px;
    white-space: nowrap;
}

.summary p a {
    color: #387783;
    text-decoration: underline;
}

/* Papers Table */
.papers {
    margin-top: 19px;
    border: 1px solid #e7e8e6;
    border-radius: 5px;
    background: #fff;
    overflow: hidden;
}

.papers-tools {
    display: flex;
    align-items: center;
    gap: 5px;
    height: 35px;
    padding: 0 14px 0 8px;
}

.tool-btn {
    display: flex;
    align-items: center;
    gap: 4px;
    height: 25px;
    padding: 0 9px;
    border: 1px solid #e4e5e3;
    border-radius: 5px;
    font-size: 10px;
}

.export-btn {
    padding: 0 4px 0 8px;
}

.upgrade-tag {
    margin-left: 2px;
    padding: 0 4px;
    border-radius: 3px;
    background: #c3e1e4;
    font-size: 9px;
    font-weight: 600;
    line-height: 15px;
}

.view-btns {
    display: flex;
    gap: 17px;
    margin-left: auto;
    color: #879292;
}

.view-btns button {
    display: flex;
}

table {
    width: 100%;
    table-layout: fixed;
    border-collapse: collapse;
}

th, td {
    border-top: 1px solid #e7e8e6;
    text-align: left;
    white-space: nowrap;
}

th + th, td + td {
    border-left: 1px solid #e7e8e6;
    padding-left: 11px;
}

th {
    height: 29px;
    background: #f8f8f6;
    font-size: 10px;
    font-weight: 500;
}

th:last-child {
    width: 213px;
}

td {
    padding-top: 10px;
    font-size: 10px;
    font-weight: 500;
    line-height: 15px;
    vertical-align: top;
}

td + td.abstract {
    padding-left: 15px;
    font-weight: 400;
}

td + td.search-col {
    padding: 12px 0 0 14px;
    font-weight: 600;
}

th label, td label {
    display: flex;
    align-items: center;
    gap: 13px;
    padding-left: 12px;
}

td label {
    align-items: flex-start;
    gap: 14px;
}

input[type="checkbox"] {
    appearance: none;
    width: 13px;
    height: 13px;
    border: 1px solid #e0e2e0;
    border-radius: 2px;
}

td input[type="checkbox"] {
    margin-top: 2px;
}

/* Floating button over the table */
.add-step {
    position: absolute;
    bottom: 14px;
    left: 50%;
    transform: translateX(-50%);
    display: flex;
    align-items: center;
    justify-content: center;
    gap: 7px;
    width: 142px;
    height: 38px;
    border-radius: 19px;
    background: #438997;
    box-shadow: 0 0 24px 10px rgba(255, 255, 255, 0.9);
    color: #fff;
    font-size: 10px;
    font-weight: 600;
}

/* Dock */
.dock-area {
    position: relative;
    height: 48px;
    padding: 2px 29px 0 28px;
    background: linear-gradient(to right, #161616 4px, #080808 5px, #080808 59px, #1c1c1c 60px, #1c1c1c 940px, #080808 1000px);
}

.dock {
    display: flex;
    justify-content: space-between;
    height: 42px;
    padding: 6px 6px 0;
    border: 1px solid #3c3c3c;
    border-radius: 10px;
    background: linear-gradient(to right, #242424 60%, #3a4648 68%, #4b5d5e 76%, #343837 84%, #1b1b1b 94%);
    box-shadow: 0 0 28px rgba(0, 0, 0, 0.4);
}

.app {
    position: relative;
    width: 26px;
    height: 26px;
}

.app > svg {
    display: block;
    width: 26px;
    height: 26px;
    overflow: visible;
}

.running::after {
    content: '';
    display: block;
    width: 3px;
    height: 3px;
    margin: 5px auto 0;
    border-radius: 50%;
    background: #b5b5b5;
}

.badge {
    position: absolute;
    top: -4px;
    right: -4px;
    width: 13px;
    border-radius: 50%;
    background: #dd4a3d;
    color: #fff;
    font-size: 8px;
    font-style: normal;
    line-height: 13px;
    text-align: center;
}

.divider {
    width: 1px;
    height: 31px;
    margin: 0 3px;
    background: #4d5152;
}

.video-meta {
    height: 4px;
    padding-left: 780px;
    overflow: hidden;
    color: #a5a5a5;
    font-size: 9px;
    line-height: 8px;
}

/* Lettering inside the app icons */
.line-mini {
    fill: #2d5a35;
    font-size: 3px;
    font-weight: 800;
    text-anchor: middle;
}

.cal-month {
    fill: #fff;
    font-size: 6px;
    font-weight: 600;
    text-anchor: middle;
}

.cal-day {
    fill: #333;
    font-size: 15px;
    text-anchor: middle;
}

.apple-tv {
    fill: #fff;
    font-size: 10px;
    font-weight: 500;
    text-anchor: middle;
}

.line-app {
    fill: #55bd3a;
    font-size: 6px;
    font-weight: 800;
    text-anchor: middle;
}

.office {
    fill: #fff;
    font-size: 7px;
    font-weight: 700;
    text-anchor: middle;
}

.en-app {
    fill: #111;
    font-size: 11px;
    font-weight: 700;
    text-anchor: middle;
}
```
